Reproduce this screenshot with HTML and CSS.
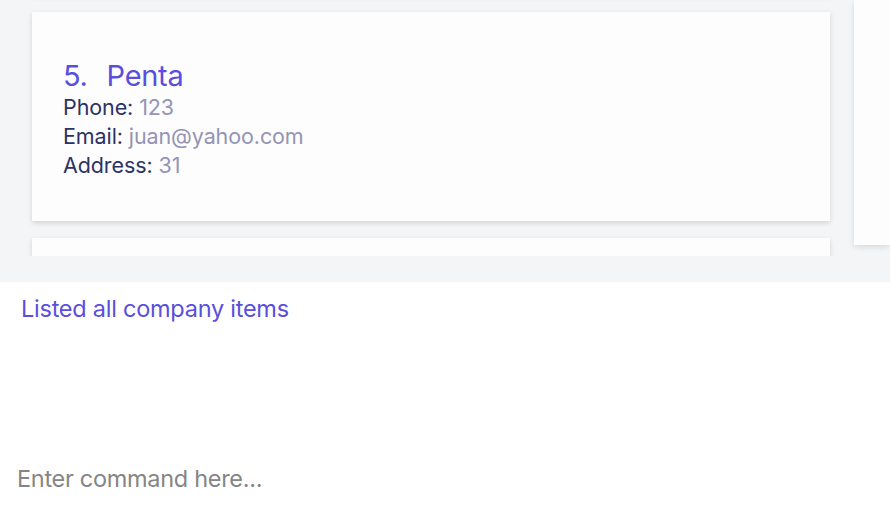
FILE: index.html
```html
<!DOCTYPE html>
<html lang="en">
<head>
<meta charset="utf-8">
<title>Company list</title>
<link rel="stylesheet" href="styles.css">
</head>
<body>
<div class="app">
  <div class="main">
    <div class="list-pane">
      <div class="list">
        <div class="card card-prev" aria-hidden="true"></div>
        <div class="card">
          <div class="title"><span class="index">5.</span>Penta</div>
          <div class="field"><span class="label">Phone:</span> <span class="value">123</span></div>
          <div class="field"><span class="label">Email:</span> <span class="value">juan@yahoo.com</span></div>
          <div class="field"><span class="label">Address:</span> <span class="value">31</span></div>
        </div>
        <div class="card"></div>
      </div>
    </div>
    <div class="side-panel"></div>
  </div>
  <div class="result">Listed all company items</div>
  <div class="command">
    <input class="command-input" type="text" placeholder="Enter command here...">
  </div>
</div>
</body>
</html>
```
FILE: styles.css
```css
html, body {
  margin: 0;
  padding: 0;
  background: #ffffff;
  font-family: Inter, "Noto Sans", sans-serif;
}
.app {
  width: 890px;
  height: 516px;
  display: flex;
  flex-direction: column;
  overflow: hidden;
}
.main {
  height: 282px;
  background: #f4f5f7;
  display: flex;
  align-items: flex-start;
}
.list-pane {
  width: 842px;
  height: 256px;
  overflow: hidden;
  flex: none;
}
.list {
  display: flex;
  flex-direction: column;
  gap: 17px;
  padding-left: 32px;
  width: 798px;
  margin-top: -214px;
}
.card {
  background: #fdfdfe;
  height: 209px;
  box-sizing: border-box;
  padding: 47px 31px 0;
  box-shadow: 0 2px 5px rgba(0, 0, 0, 0.14);
  flex: none;
}
.title {
  color: #5a4fdc;
  font-size: 29px;
  line-height: 34px;
  letter-spacing: -0.3px;
}
.index {
  margin-right: 19px;
}
.field {
  font-size: 21.5px;
  line-height: 29px;
  letter-spacing: -0.1px;
}
.label {
  color: #2c3264;
}
.value {
  color: #9494b4;
}
.side-panel {
  margin-left: 12px;
  width: 36px;
  height: 245px;
  background: #fdfdfe;
  box-shadow: 0 2px 6px rgba(0, 0, 0, 0.12);
  flex: none;
}
.result {
  height: 168px;
  padding: 13px 0 0 21px;
  box-sizing: border-box;
  color: #5a4fdc;
  font-size: 23.5px;
  line-height: 28px;
  letter-spacing: -0.25px;
}
.command {
  flex: 1;
  display: flex;
}
.command-input {
  border: none;
  outline: none;
  background: transparent;
  font-family: Inter, "Noto Sans", sans-serif;
  font-size: 23.5px;
  letter-spacing: -0.3px;
  padding: 0 0 0 17px;
  margin: 0;
  height: 57px;
  width: 100%;
}
.command-input::placeholder {
  color: #858585;
}
```
